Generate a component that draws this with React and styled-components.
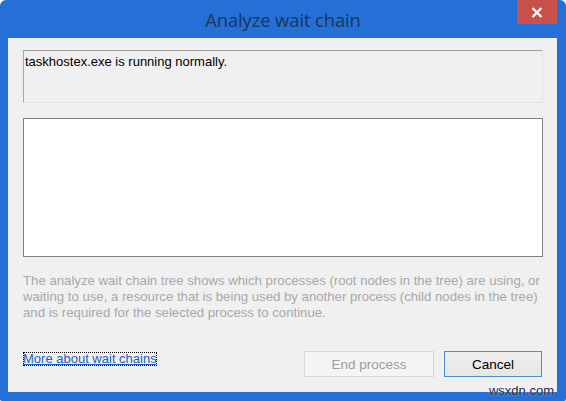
import React from "react";
import styled, { createGlobalStyle } from "styled-components";

const GlobalStyle = createGlobalStyle`
  html, body {
    margin: 0;
    padding: 0;
    background: #ffffff;
  }
  body {
    font-family: "Liberation Sans", Arial, sans-serif;
  }
`;

const Window = styled.div`
  position: relative;
  display: flex;
  flex-direction: column;
  width: 566px;
  height: 401px;
  box-sizing: border-box;
  background: #2470d6;
  border-radius: 6px 6px 2px 2px;
  overflow: hidden;
`;

const TitleBar = styled.div`
  display: grid;
  grid-template-columns: 1fr auto 1fr;
  height: 38px;
  flex-shrink: 0;
`;

const Title = styled.h1`
  grid-column: 2;
  margin: 0;
  align-self: center;
  padding-top: 1px;
  font-family: "Open Sans", "Noto Sans", sans-serif;
  font-weight: 400;
  font-size: 18.4px;
  color: #1c3559;
  letter-spacing: -0.1px;
`;

const CloseButton = styled.button`
  grid-column: 3;
  justify-self: end;
  align-self: start;
  width: 40px;
  height: 24px;
  margin-right: 9px;
  padding: 0;
  border: none;
  background: #c9504b;
  display: flex;
  align-items: center;
  justify-content: center;
  cursor: pointer;
`;

const Content = styled.div`
  flex: 1;
  display: flex;
  flex-direction: column;
  margin: 0 9px 9px 8px;
  padding: 12px 14px 15px 15px;
  background: #f0f0f0;
`;

const StatusBox = styled.div`
  height: 53px;
  box-sizing: border-box;
  padding: 3px 1px;
  border-style: solid;
  border-width: 1px;
  border-color: #a0a0a0 #e3e3e3 #e3e3e3 #a8a8a8;
  font-size: 13px;
  line-height: 16px;
  color: #000000;
`;

const TreeBox = styled.div`
  height: 139px;
  margin-top: 15px;
  box-sizing: border-box;
  border: 1px solid #828282;
  background: #ffffff;
`;

const Description = styled.p`
  margin: 16px 0 0;
  font-size: 13.2px;
  line-height: 16px;
  color: #a8a8a8;
`;

const Footer = styled.div`
  margin-top: auto;
  display: flex;
  align-items: flex-start;
`;

const HelpLink = styled.a`
  margin-top: 1px;
  font-size: 13px;
  line-height: 14px;
  color: #1a62c1;
  text-decoration: underline;
  outline: 1px dotted #000000;
  outline-offset: -1px;
  cursor: pointer;
`;

const Buttons = styled.div`
  margin-left: auto;
  margin-right: 1px;
  display: flex;
  gap: 10px;
`;

const Button = styled.button`
  width: ${(p) => p.$width}px;
  height: 26px;
  box-sizing: border-box;
  padding: 0;
  font-family: "Liberation Sans", Arial, sans-serif;
  font-size: 13.5px;
  color: ${(p) => (p.disabled ? "#9d9d9d" : "#000000")};
  background: ${(p) =>
    p.disabled ? "#f4f4f4" : "linear-gradient(#efefef, #e6e6e6)"};
  border: 1px solid ${(p) => (p.disabled ? "#d9d9d9" : "#4a8ed6")};
  border-radius: 0;
`;

const Watermark = styled.span`
  position: absolute;
  right: 12px;
  bottom: 3px;
  font-size: 13px;
  color: #1c2a44;
  text-shadow: 0 0 2px rgba(255, 255, 255, 0.7);
`;

const App = () => {
  return (
    <>
      <GlobalStyle />
      <Window>
        <TitleBar>
          <Title>Analyze wait chain</Title>
          <CloseButton aria-label="Close">
            <svg width="12" height="11" viewBox="0 0 12 11">
              <path
                d="M1.5 1 L10.5 10 M10.5 1 L1.5 10"
                stroke="#ffffff"
                strokeWidth="2.2"
                fill="none"
              />
            </svg>
          </CloseButton>
        </TitleBar>
        <Content>
          <StatusBox>taskhostex.exe is running normally.</StatusBox>
          <TreeBox />
          <Description>
            The analyze wait chain tree shows which processes (root nodes in the tree) are using, or
            waiting to use, a resource that is being used by another process (child nodes in the tree)
            and is required for the selected process to continue.
          </Description>
          <Footer>
            <HelpLink>More about wait chains</HelpLink>
            <Buttons>
              <Button $width={130} disabled>
                End process
              </Button>
              <Button $width={98}>Cancel</Button>
            </Buttons>
          </Footer>
        </Content>
        <Watermark>wsxdn.com</Watermark>
      </Window>
    </>
  );
};

export default App;
